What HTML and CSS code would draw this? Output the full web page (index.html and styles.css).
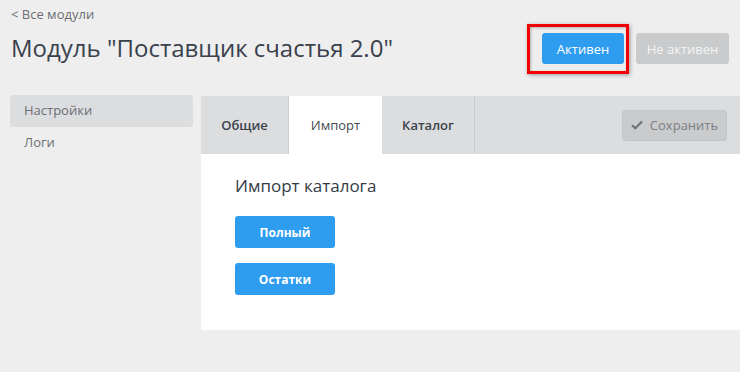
FILE: index.html
```html
<!DOCTYPE html>
<html lang="ru">
<head>
<meta charset="utf-8">
<link rel="stylesheet" href="styles.css">
</head>
<body>
<div class="header">
  <div class="titles">
    <a class="back" href="#">&lt; Все модули</a>
    <h1 class="title">Модуль "Поставщик счастья 2.0"</h1>
  </div>
  <div class="status">
    <span class="btn-wrap">
      <button class="btn btn-active">Активен</button>
      <span class="highlight"></span>
    </span>
    <button class="btn btn-inactive">Не активен</button>
  </div>
</div>
<div class="body">
  <nav class="sidebar">
    <div class="side-item selected">Настройки</div>
    <div class="side-item">Логи</div>
  </nav>
  <main class="panel">
    <div class="tabbar">
      <div class="tab">Общие</div>
      <div class="tab current">Импорт</div>
      <div class="tab">Каталог</div>
      <div class="spacer"></div>
      <button class="save">
        <svg width="12" height="10" viewBox="0 0 12 10"><path d="M1 5.2 L4.3 8.3 L11 1.5" fill="none" stroke="#707274" stroke-width="2.2"/></svg>
        Сохранить
      </button>
    </div>
    <div class="content">
      <h2 class="section-title">Импорт каталога</h2>
      <button class="action">Полный</button>
      <button class="action">Остатки</button>
    </div>
  </main>
</div>
</body>
</html>
```

FILE: styles.css
```css
html, body {
  margin: 0;
  padding: 0;
  background: #eeeeee;
  font-family: "Open Sans", "Liberation Sans", sans-serif;
}
.header {
  display: flex;
  justify-content: space-between;
  padding: 0 11px 0 11px;
  height: 95px;
}
.titles {
  display: flex;
  flex-direction: column;
}
.back {
  margin-top: 5px;
  font-size: 13px;
  line-height: 18px;
  color: #6b6e72;
  text-decoration: none;
}
.title {
  margin: 9px 0 0 0;
  font-size: 24px;
  line-height: 32px;
  font-weight: 400;
  color: #39414c;
}
.status {
  display: flex;
  gap: 12px;
  margin-top: 33px;
  align-self: flex-start;
}
.btn-wrap {
  position: relative;
  display: flex;
}
.btn {
  height: 31px;
  border: none;
  border-radius: 3px;
  font-family: inherit;
  font-size: 13px;
  color: #fff;
  padding: 0;
}
.btn-active {
  width: 82px;
  background: #2e9cef;
}
.btn-inactive {
  width: 93px;
  background: #c9cbcd;
  color: #f4f4f4;
}
.highlight {
  position: absolute;
  left: -15px;
  top: -9px;
  right: -5px;
  bottom: -10px;
  border: 3px solid #f40000;
  box-shadow: 1px 1px 4px rgba(0,0,0,0.35), inset 1px 1px 3px rgba(0,0,0,0.25);
  pointer-events: none;
}
.body {
  display: flex;
  gap: 8px;
  padding-left: 10px;
}
.sidebar {
  width: 183px;
  flex: none;
}
.side-item {
  height: 32px;
  line-height: 30px;
  padding-left: 14px;
  font-size: 13px;
  color: #6b6e72;
  border-radius: 3px;
}
.side-item.selected {
  background: #dcdddf;
}
.panel {
  flex: 1;
  margin-top: 1px;
  background: #fff;
  height: 234px;
}
.tabbar {
  display: flex;
  align-items: center;
  height: 58px;
  background: #dcdddf;
}
.tab {
  height: 58px;
  line-height: 58px;
  border-right: 1px solid #cbccce;
  font-size: 13px;
  font-weight: 600;
  color: #3b424c;
  text-align: center;
}
.tab:nth-child(1) { width: 87px; }
.tab:nth-child(2) { width: 93px; border-right: none; }
.tab:nth-child(3) { width: 92px; }
.tab.current {
  background: #fff;
  font-weight: 400;
  color: #444a52;
}
.spacer { flex: 1; }
.save {
  width: 105px;
  height: 31px;
  margin-right: 13px;
  border: 1px solid #c4c6c8;
  border-radius: 3px;
  background: #c9cbcd;
  font-family: inherit;
  font-size: 13px;
  color: #7d8084;
  display: flex;
  align-items: center;
  justify-content: center;
  gap: 7px;
  padding: 0;
}
.content {
  padding: 20px 0 0 34px;
  display: flex;
  flex-direction: column;
  align-items: flex-start;
}
.section-title {
  margin: 0;
  font-size: 17px;
  line-height: 24px;
  font-weight: 500;
  color: #333b46;
}
.action {
  width: 100px;
  height: 32px;
  margin-top: 15px;
  border: none;
  border-radius: 3px;
  background: #2e9cef;
  color: #fff;
  font-family: inherit;
  font-size: 12px;
  font-weight: 700;
  padding: 0;
}
.section-title + .action { margin-top: 18px; }
```
